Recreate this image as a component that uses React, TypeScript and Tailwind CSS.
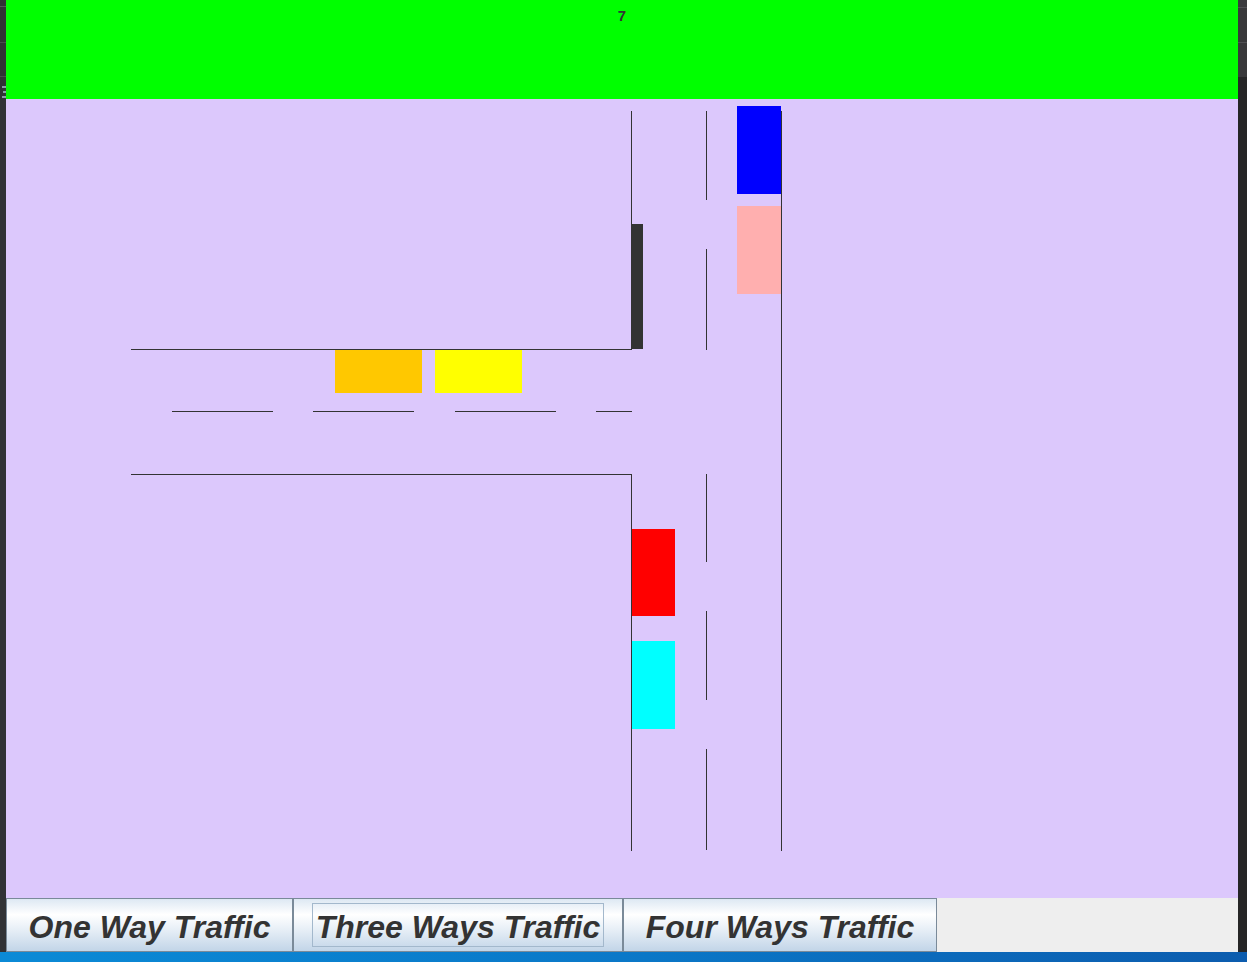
import React from "react";

const LINE = "#333333";

type R = { x: number; y: number; w: number; h: number; c: string };

const lines: R[] = [
  { x: 625, y: 12, w: 1, h: 239, c: LINE },
  { x: 625, y: 375, w: 1, h: 377, c: LINE },
  { x: 125, y: 250, w: 501, h: 1, c: LINE },
  { x: 125, y: 375, w: 501, h: 1, c: LINE },
  { x: 166, y: 312, w: 101, h: 1, c: LINE },
  { x: 307, y: 312, w: 101, h: 1, c: LINE },
  { x: 449, y: 312, w: 101, h: 1, c: LINE },
  { x: 590, y: 312, w: 36, h: 1, c: LINE },
  { x: 700, y: 12, w: 1, h: 89, c: LINE },
  { x: 700, y: 150, w: 1, h: 101, c: LINE },
  { x: 700, y: 375, w: 1, h: 88, c: LINE },
  { x: 700, y: 512, w: 1, h: 89, c: LINE },
  { x: 700, y: 650, w: 1, h: 101, c: LINE },
  { x: 775, y: 12, w: 1, h: 740, c: LINE },
];

const blocks: R[] = [
  { x: 625, y: 125, w: 12, h: 125, c: "#333333" },
  { x: 731, y: 7, w: 44, h: 88, c: "#0000ff" },
  { x: 731, y: 107, w: 44, h: 88, c: "#ffafaf" },
  { x: 329, y: 251, w: 87, h: 43, c: "#ffc800" },
  { x: 429, y: 251, w: 87, h: 43, c: "#ffff00" },
  { x: 626, y: 430, w: 43, h: 87, c: "#ff0000" },
  { x: 626, y: 542, w: 43, h: 88, c: "#00ffff" },
];

function TrafficButton({
  label,
  width,
  focused,
}: {
  label: string;
  width: string;
  focused?: boolean;
}) {
  return (
    <div
      className={`${width} h-[54px] border border-[#7a8a99] bg-[linear-gradient(to_bottom,#dde8f3_0%,#ffffff_30%,#e6eef6_60%,#c2d5e8_100%)] flex items-center justify-center`}
    >
      {focused ? (
        <span className="h-[44px] flex items-center pt-[3px] px-[3px] border border-[#a3b8cc] text-[32px] leading-none font-bold italic text-[#333333] font-['Liberation_Sans',Arial,sans-serif] whitespace-nowrap">
          {label}
        </span>
      ) : (
        <span className="pt-[3px] text-[32px] leading-none font-bold italic text-[#333333] font-['Liberation_Sans',Arial,sans-serif] whitespace-nowrap">
          {label}
        </span>
      )}
    </div>
  );
}

export default function App() {
  return (
    <div className="w-[1247px] h-[962px] flex flex-col overflow-hidden bg-[#2b2b2b] font-['Liberation_Sans',Arial,sans-serif]">
      <div className="flex h-[952px]">
        <div className="w-[6px] bg-[#313235] flex flex-col">
          <div className="h-[6px]" />
          <div className="h-px bg-[#55575a]" />
          <div className="h-[35px]" />
          <div className="h-px bg-[#4a4c4f]" />
          <div className="h-[33px]" />
          <div className="h-px bg-[#4a4c4f]" />
          <div className="h-[9px]" />
          <div className="h-[2px] w-[4px] ml-[2px] bg-[#8a9aa8]" />
          <div className="h-[3px]" />
          <div className="h-[2px] w-[3px] ml-[3px] bg-[#8a9aa8]" />
          <div className="h-[3px]" />
          <div className="h-[2px] w-[4px] ml-[2px] bg-[#8a9aa8]" />
        </div>

        <div className="w-[1232px] flex flex-col">
          <div className="h-[99px] bg-[#00ff00] flex justify-center pt-[8px]">
            <span className="text-[15px] leading-4 font-semibold text-[#333333] h-4">7</span>
          </div>
          <div className="h-[799px] bg-[#dcc8fc]">
            <svg
              width="1232"
              height="799"
              viewBox="0 0 1232 799"
              shapeRendering="crispEdges"
              className="block"
            >
              {lines.map((r, i) => (
                <rect key={`l${i}`} x={r.x} y={r.y} width={r.w} height={r.h} fill={r.c} />
              ))}
              {blocks.map((r, i) => (
                <rect key={`b${i}`} x={r.x} y={r.y} width={r.w} height={r.h} fill={r.c} />
              ))}
            </svg>
          </div>
          <div className="h-[54px] bg-[#eeeeee] flex">
            <TrafficButton label="One Way Traffic" width="w-[287px]" />
            <TrafficButton label="Three Ways Traffic" width="w-[330px]" focused />
            <TrafficButton label="Four Ways Traffic" width="w-[314px]" />
          </div>
        </div>

        <div className="flex-1 flex flex-col bg-[#252526]">
          <div className="h-[7px] bg-[#3a3a3c]" />
          <div className="h-px bg-[#505053]" />
          <div className="h-[34px] bg-[#38383a]" />
          <div className="h-px bg-[#505053]" />
          <div className="h-[34px] bg-[#38383a]" />
          <div className="flex-1 bg-[#252526]" />
        </div>
      </div>
      <div className="h-[10px] bg-[linear-gradient(to_right,#0b8ad6,#0a78c8_50%,#0c5cae)]" />
    </div>
  );
}
